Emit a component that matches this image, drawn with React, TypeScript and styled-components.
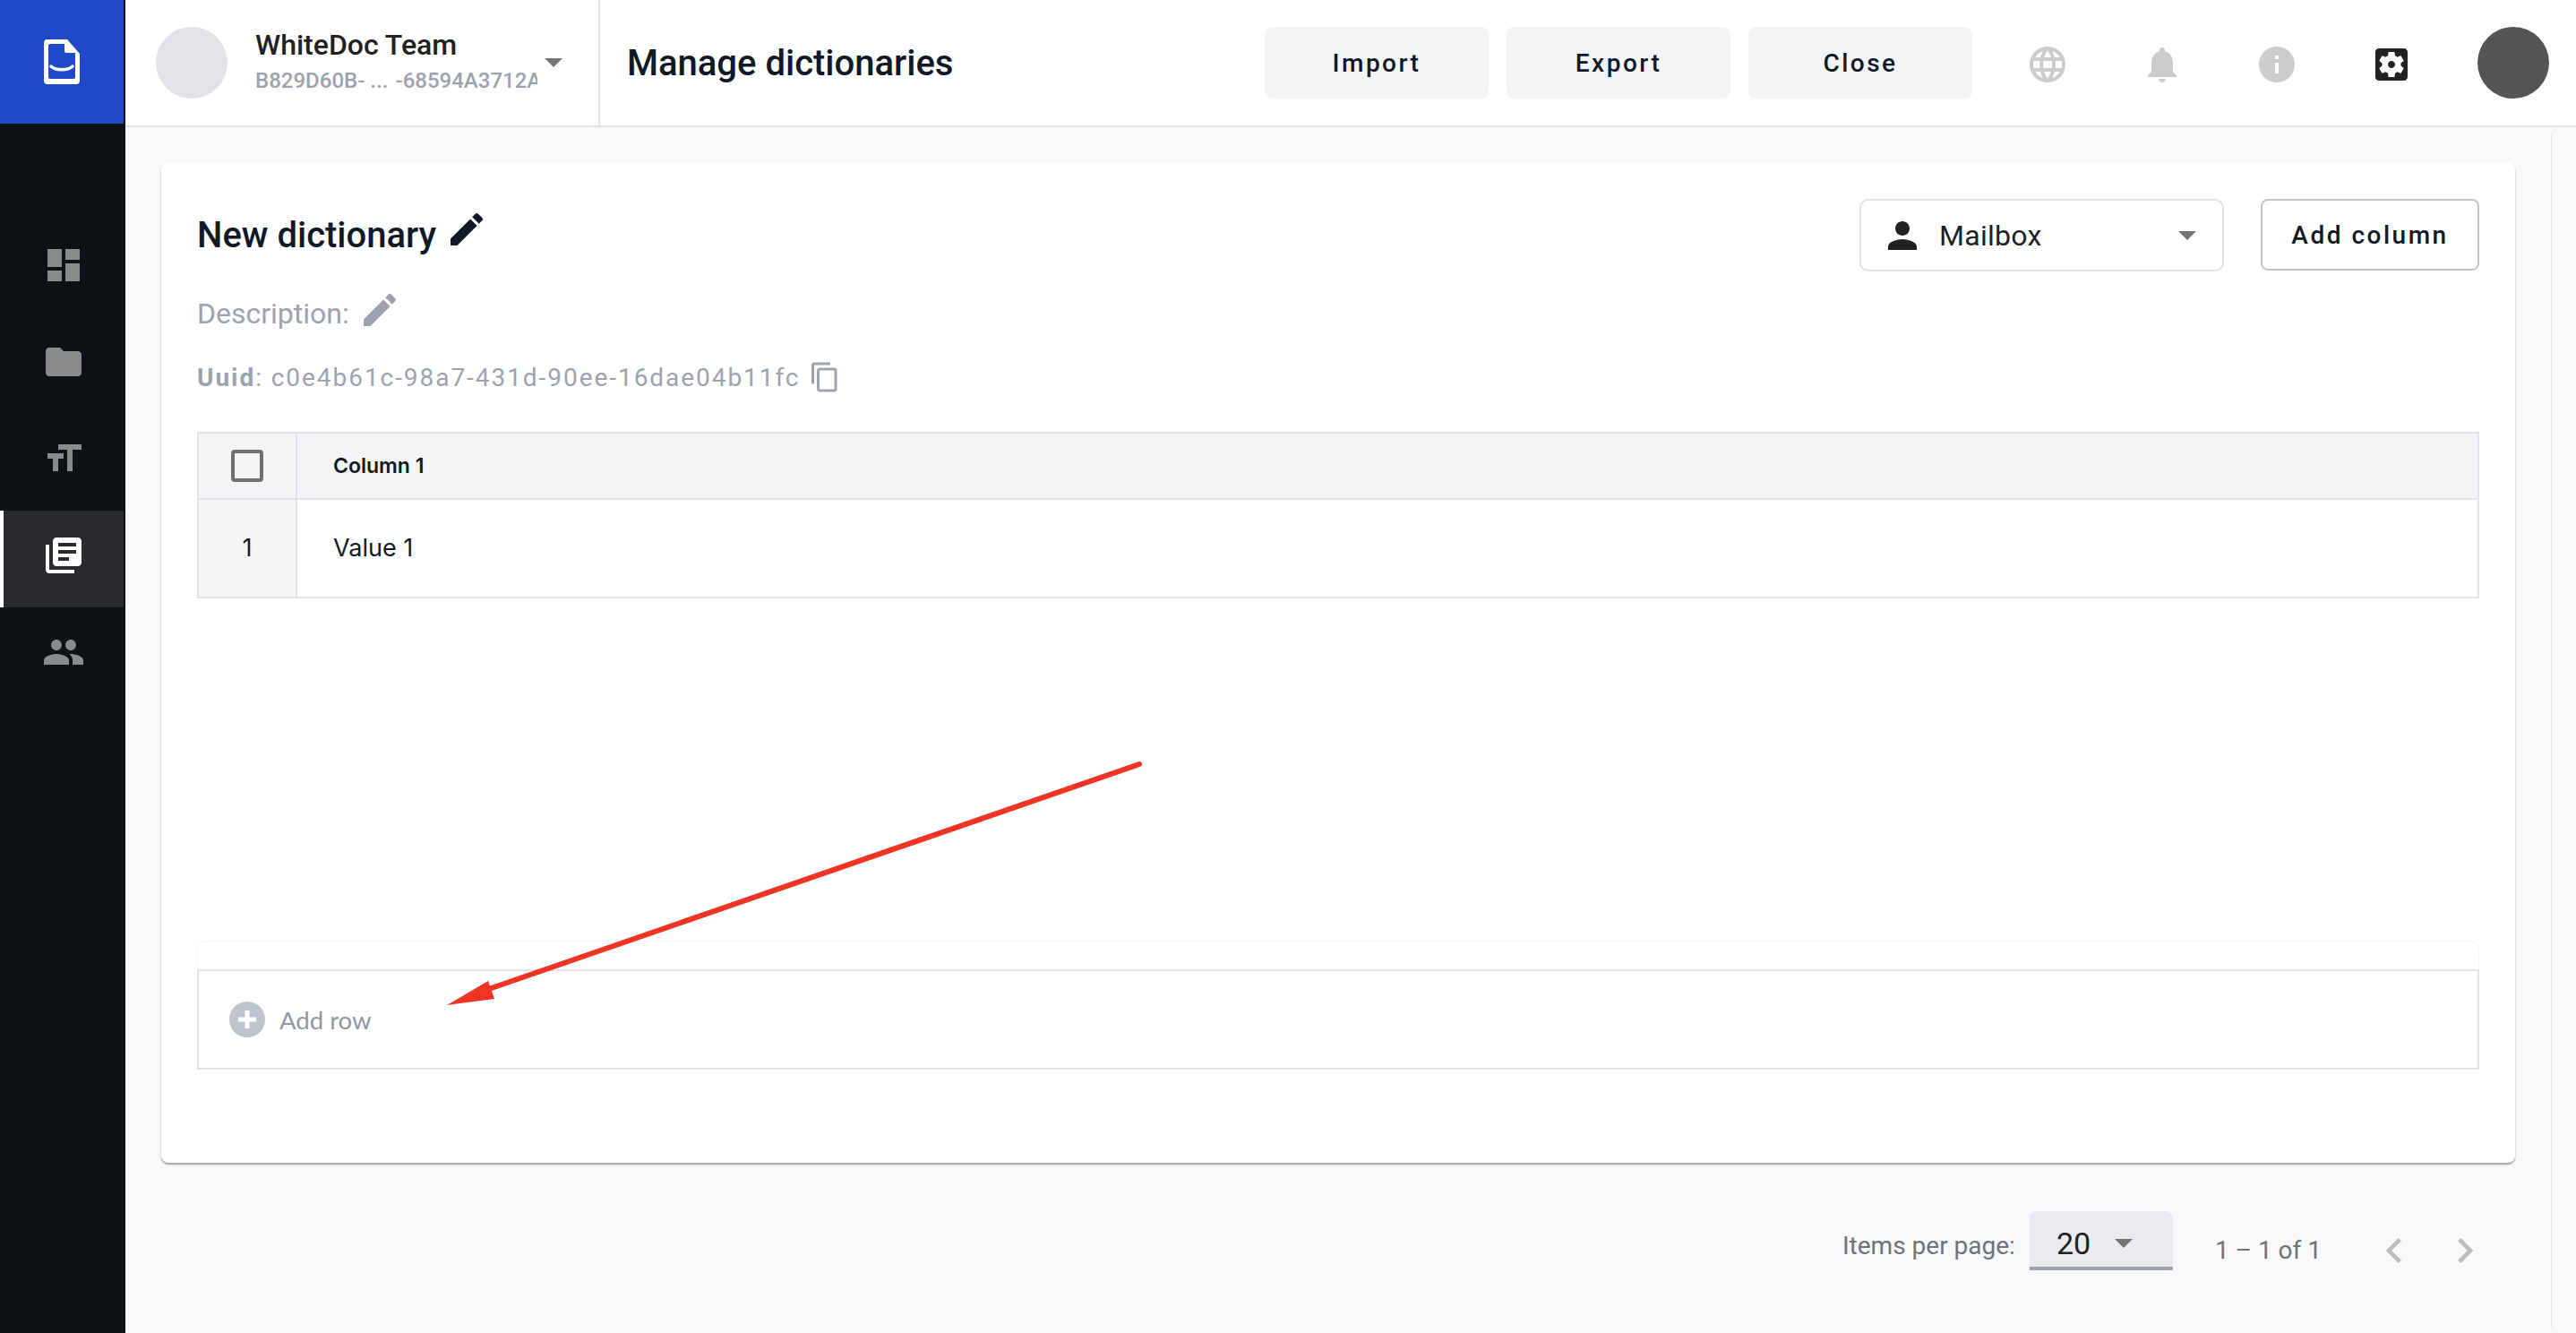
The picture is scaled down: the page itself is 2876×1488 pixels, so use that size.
import styled, { createGlobalStyle } from "styled-components";

const GlobalStyle = createGlobalStyle`
  html, body {
    margin: 0;
    padding: 0;
    background: #f7f8fa;
    font-family: Roboto, "Liberation Sans", sans-serif;
  }
  * {
    box-sizing: border-box;
  }
`;

const Page = styled.div`
  position: relative;
  display: flex;
  width: 2876px;
  height: 1488px;
  overflow: hidden;
  background: #f7f8fa;
`;

const Sidebar = styled.aside`
  flex: 0 0 140px;
  display: flex;
  flex-direction: column;
  background: #0e1116;
`;

const LogoBox = styled.div`
  width: 138px;
  height: 138px;
  display: flex;
  align-items: center;
  justify-content: center;
  background: #2049c5;
`;

const NavList = styled.nav`
  display: flex;
  flex-direction: column;
  margin-top: 108px;
`;

const NavItem = styled.div<{ $active?: boolean }>`
  width: 138px;
  height: 108px;
  display: flex;
  align-items: center;
  justify-content: center;
  padding-bottom: 8px;
  color: ${(p) => (p.$active ? "#ffffff" : "#8a8b8d")};
  background: ${(p) => (p.$active ? "#2a2b30" : "transparent")};
  border-left: 4px solid ${(p) => (p.$active ? "#ffffff" : "transparent")};
`;

const Main = styled.div`
  flex: 1;
  display: flex;
  flex-direction: column;
  min-width: 0;
`;

const Header = styled.header`
  flex: 0 0 142px;
  display: flex;
  align-items: center;
  background: #ffffff;
  border-bottom: 2px solid #e1e3e8;
`;

const TeamBox = styled.div`
  width: 530px;
  height: 140px;
  display: flex;
  align-items: center;
  padding-left: 34px;
  border-right: 2px solid #e1e3e8;
`;

const TeamAvatar = styled.div`
  flex: none;
  width: 80px;
  height: 80px;
  border-radius: 50%;
  background: #e1e3e8;
  margin-right: 31px;
`;

const TeamText = styled.div`
  width: 315px;
  padding-bottom: 5px;
  overflow: hidden;
  white-space: nowrap;
`;

const TeamName = styled.div`
  font-size: 32px;
  line-height: 40px;
  font-weight: 500;
  color: #212121;
  margin-bottom: 5px;
`;

const TeamId = styled.div`
  font-size: 24px;
  line-height: 30px;
  font-weight: 500;
  color: #9ca3af;
`;

const Caret = styled.span`
  display: block;
  flex: none;
  width: 0;
  height: 0;
  border-left: 10px solid transparent;
  border-right: 10px solid transparent;
  border-top: 10px solid #757575;
`;

const TeamCaret = styled(Caret)`
  margin-left: 8px;
`;

const PageTitle = styled.h1`
  flex: 1;
  margin: 0 0 0 30px;
  font-size: 40px;
  font-weight: 500;
  color: #111827;
`;

const ActionGroup = styled.div`
  display: flex;
  gap: 20px;
  margin-right: 60px;
`;

const ActionButton = styled.button`
  width: 250px;
  height: 80px;
  border: none;
  border-radius: 8px;
  background: #f3f4f6;
  color: #111827;
  font-family: Roboto, sans-serif;
  font-size: 28px;
  font-weight: 500;
  letter-spacing: 2.5px;
`;

const HeaderIcons = styled.div`
  display: flex;
  align-items: center;
  gap: 80px;
  margin: 4px 72px 0 0;
`;

const UserAvatar = styled.div`
  flex: none;
  width: 80px;
  height: 80px;
  margin-right: 30px;
  border-radius: 50%;
  background: #555555;
`;

const Body = styled.div`
  flex: 1;
  display: flex;
  min-height: 0;
`;

const Content = styled.div`
  flex: 1;
  min-width: 0;
  display: flex;
  flex-direction: column;
  padding: 40px 40px 0 40px;
`;

const RightRail = styled.div`
  flex: 0 0 28px;
  border-left: 1px solid #e3e5e9;
  border-radius: 10px 0 0 10px;
`;

const Card = styled.section`
  flex: 0 0 1116px;
  padding: 40px;
  display: flex;
  flex-direction: column;
  background: #ffffff;
  border-radius: 8px;
  box-shadow: 0 2px 2px rgba(0, 0, 0, 0.35);
`;

const CardTop = styled.div`
  flex: 0 0 260px;
  display: flex;
  justify-content: space-between;
  align-items: flex-start;
`;

const Info = styled.div`
  display: flex;
  flex-direction: column;
`;

const DictTitle = styled.h2`
  display: flex;
  align-items: center;
  gap: 10px;
  margin: 0;
  height: 80px;
  font-size: 40px;
  font-weight: 500;
  color: #111827;
`;

const Description = styled.div`
  display: flex;
  align-items: center;
  gap: 10px;
  margin-top: 28px;
  height: 40px;
  font-size: 32px;
  color: #9ca3af;
`;

const RaisedIcon = styled.span<{ $lift: number }>`
  display: flex;
  margin-bottom: ${(p) => p.$lift}px;
`;

const Uuid = styled.div`
  display: flex;
  align-items: center;
  gap: 10px;
  margin-top: 31px;
  height: 40px;
  font-size: 28px;
  letter-spacing: 1.95px;
  color: #9ca3af;

  strong {
    font-weight: 700;
  }
`;

const TopControls = styled.div`
  display: flex;
  gap: 41px;
`;

const Select = styled.div`
  width: 407px;
  height: 81px;
  display: flex;
  align-items: center;
  padding: 0 29px 0 22px;
  border: 2px solid #e1e1e3;
  border-radius: 10px;
  font-size: 32px;
  letter-spacing: 0.3px;
  color: #212121;
`;

const SelectLabel = styled.span`
  flex: 1;
  margin-left: 17px;
`;

const OutlineButton = styled.button`
  width: 244px;
  height: 80px;
  background: #ffffff;
  border: 2px solid #c0c5cb;
  border-radius: 8px;
  color: #111827;
  font-family: Roboto, sans-serif;
  font-size: 28px;
  font-weight: 500;
  letter-spacing: 2.5px;
`;

const TableWrap = styled.div`
  display: grid;
  grid-template-columns: 110px 1fr;
  border: solid #e1e3e8;
  border-width: 2px 2px 0 2px;
`;

const Cell = styled.div<{ $head?: boolean; $index?: boolean }>`
  height: ${(p) => (p.$head ? "74px" : "110px")};
  display: flex;
  align-items: center;
  justify-content: ${(p) => (p.$index ? "center" : "flex-start")};
  padding-left: ${(p) => (p.$index ? "0" : "40px")};
  padding-bottom: ${(p) => (p.$head ? "0" : "2px")};
  background: ${(p) => (p.$head || p.$index ? "#f3f4f6" : "#ffffff")};
  border-bottom: 2px solid #e1e3e8;
  border-right: ${(p) => (p.$index ? "2px solid #e1e3e8" : "none")};
  font-size: ${(p) => (p.$head ? "23px" : "27px")};
  font-weight: ${(p) => (p.$head ? 600 : 400)};
  font-family: Inter, sans-serif;
  color: #111827;
`;

const Checkbox = styled.div`
  width: 36px;
  height: 36px;
  border: 4px solid #6f6f6f;
  border-radius: 4px;
`;

const Spacer = styled.div`
  flex: 1;
`;

const GhostRow = styled.div`
  height: 32px;
  border: 1px solid #f5f5f7;
  border-bottom: none;
  border-radius: 10px 10px 0 0;
`;

const AddRow = styled.div`
  height: 112px;
  display: flex;
  align-items: center;
  gap: 16px;
  padding-left: 34px;
  margin-bottom: 64px;
  border: 2px solid #e1e3e8;
  font-family: Lato, sans-serif;
  font-size: 27.5px;
  color: #9097a0;
`;

const PlusCircle = styled.div`
  width: 40px;
  height: 40px;
  display: flex;
  align-items: center;
  justify-content: center;
  border-radius: 50%;
  background: #bdc4ca;
`;

const Pagination = styled.div`
  display: flex;
  align-items: flex-start;
  margin-top: 54px;
  padding-left: 1877px;
`;

const PageLabel = styled.div`
  margin-top: 22px;
  font-size: 28px;
  line-height: 34px;
  color: #6f7276;
`;

const PageSelect = styled.div`
  width: 160px;
  height: 66px;
  margin: 0 47px 0 16px;
  display: flex;
  align-items: center;
  gap: 27px;
  padding: 10px 0 0 30px;
  background: #e9eaed;
  border-bottom: 4px solid #9ca3af;
  border-radius: 8px 8px 0 0;
  font-size: 34px;
  color: #212121;
`;

const PageCount = styled.div`
  margin-top: 27px;
  font-size: 28px;
  line-height: 34px;
  color: #6f7276;
`;

const PagerIcons = styled.div`
  display: flex;
  gap: 23px;
  margin: 16px 0 0 53px;
  color: #bdbdbd;
`;

const Overlay = styled.svg`
  position: absolute;
  inset: 0;
  pointer-events: none;
`;

const Path = ({ size, d }: { size: number; d: string }) => (
  <svg width={size} height={size} viewBox="0 0 24 24" fill="currentColor">
    <path d={d} />
  </svg>
);

const PENCIL = "M3 17.25V21h3.75L17.81 9.94l-3.75-3.75L3 17.25zM20.71 7.04a1 1 0 0 0 0-1.41l-2.34-2.34a1 1 0 0 0-1.41 0l-1.83 1.83 3.75 3.75 1.83-1.83z";

export default function App() {
  return (
    <>
      <GlobalStyle />
      <Page>
        <Sidebar>
          <LogoBox>
            <svg width="40" height="50" viewBox="0 0 40 50">
              <path fill="#ffffff" d="M4 0h22l14 16v30a4 4 0 0 1-4 4H4a4 4 0 0 1-4-4V4a4 4 0 0 1 4-4z" />
              <path fill="#2049c5" d="M7 5h16v8a2 2 0 0 0 2 2h10v27a2 2 0 0 1-2 2H7a2 2 0 0 1-2-2V7a2 2 0 0 1 2-2z" />
              <path fill="none" stroke="#ffffff" strokeWidth="3.5" strokeLinecap="round" d="M8 30c5 5 19 5 24 0" />
            </svg>
          </LogoBox>
          <NavList>
            <NavItem>
              <Path size={48} d="M3 13h8V3H3v10zm0 8h8v-6H3v6zm10 0h8V11h-8v10zm0-18v6h8V3h-8z" />
            </NavItem>
            <NavItem>
              <Path size={48} d="M10 4H4c-1.1 0-2 .9-2 2v12c0 1.1.9 2 2 2h16c1.1 0 2-.9 2-2V8c0-1.1-.9-2-2-2h-8l-2-2z" />
            </NavItem>
            <NavItem>
              <Path size={48} d="M9 4v3h5v12h3V7h5V4H9zm-6 8h3v7h3v-7h3V9H3v3z" />
            </NavItem>
            <NavItem $active>
              <Path size={48} d="M4 6H2v14c0 1.1.9 2 2 2h14v-2H4V6zm16-4H8c-1.1 0-2 .9-2 2v12c0 1.1.9 2 2 2h12c1.1 0 2-.9 2-2V4c0-1.1-.9-2-2-2zm-1 9H9V9h10v2zm-4 4H9v-2h6v2zm4-8H9V5h10v2z" />
            </NavItem>
            <NavItem>
              <Path size={48} d="M16 11c1.66 0 2.99-1.34 2.99-3S17.66 5 16 5c-1.66 0-3 1.34-3 3s1.34 3 3 3zm-8 0c1.66 0 2.99-1.34 2.99-3S9.66 5 8 5C6.34 5 5 6.34 5 8s1.34 3 3 3zm0 2c-2.33 0-7 1.17-7 3.5V19h14v-2.5c0-2.33-4.67-3.5-7-3.5zm8 0c-.29 0-.62.02-.97.05 1.16.84 1.97 1.97 1.97 3.45V19h6v-2.5c0-2.33-4.67-3.5-7-3.5z" />
            </NavItem>
          </NavList>
        </Sidebar>
        <Main>
          <Header>
            <TeamBox>
              <TeamAvatar />
              <TeamText>
                <TeamName>WhiteDoc Team</TeamName>
                <TeamId>B829D60B- ...{"\u2004"}-68594A3712A</TeamId>
              </TeamText>
              <TeamCaret />
            </TeamBox>
            <PageTitle>Manage dictionaries</PageTitle>
            <ActionGroup>
              <ActionButton>Import</ActionButton>
              <ActionButton>Export</ActionButton>
              <ActionButton>Close</ActionButton>
            </ActionGroup>
            <HeaderIcons>
              <svg width="48" height="48" viewBox="0 0 24 24" fill="#cccccc">
                <path d="M11.99 2C6.47 2 2 6.48 2 12s4.47 10 9.99 10C17.52 22 22 17.52 22 12S17.52 2 11.99 2zm6.93 6h-2.95a15.65 15.65 0 0 0-1.38-3.56A8.03 8.03 0 0 1 18.92 8zM12 4.04c.83 1.2 1.48 2.53 1.91 3.96h-3.82c.43-1.43 1.08-2.76 1.91-3.96zM4.26 14C4.1 13.36 4 12.69 4 12s.1-1.36.26-2h3.38c-.08.66-.14 1.32-.14 2s.06 1.34.14 2H4.26zm.82 2h2.95c.32 1.25.78 2.45 1.38 3.56A7.99 7.99 0 0 1 5.08 16zm2.95-8H5.08a7.99 7.99 0 0 1 4.33-3.56A15.65 15.65 0 0 0 8.03 8zM12 19.96c-.83-1.2-1.48-2.53-1.91-3.96h3.82c-.43 1.43-1.08 2.76-1.91 3.96zM14.34 14H9.66c-.09-.66-.16-1.32-.16-2s.07-1.35.16-2h4.68c.09.65.16 1.32.16 2s-.07 1.34-.16 2zm.25 5.56c.6-1.11 1.06-2.31 1.38-3.56h2.95a8.03 8.03 0 0 1-4.33 3.56zM16.36 14c.08-.66.14-1.32.14-2s-.06-1.34-.14-2h3.38c.16.64.26 1.31.26 2s-.1 1.36-.26 2h-3.38z" />
              </svg>
              <svg width="48" height="48" viewBox="0 0 24 24" fill="#cccccc">
                <path d="M12 22c1.1 0 2-.9 2-2h-4c0 1.1.89 2 2 2zm6-6v-5c0-3.07-1.64-5.64-4.5-6.32V4c0-.83-.67-1.5-1.5-1.5s-1.5.67-1.5 1.5v.68C7.63 5.36 6 7.92 6 11v5l-2 2v1h16v-1l-2-2z" />
              </svg>
              <svg width="48" height="48" viewBox="0 0 24 24" fill="#cccccc">
                <path d="M12 2C6.48 2 2 6.48 2 12s4.48 10 10 10 10-4.48 10-10S17.52 2 12 2zm1 15h-2v-6h2v6zm0-8h-2V7h2v2z" />
              </svg>
              <svg width="48" height="48" viewBox="0 0 24 24" fill="#212121">
                <path d="M19 3H5c-1.1 0-2 .9-2 2v14c0 1.1.9 2 2 2h14c1.1 0 2-.9 2-2V5c0-1.1-.9-2-2-2zm-1.75 9c0 .23-.02.46-.05.68l1.48 1.16c.13.11.17.3.08.45l-1.4 2.42c-.09.15-.27.21-.43.15l-1.74-.7c-.36.28-.76.51-1.18.69l-.26 1.85c-.03.17-.18.3-.35.3h-2.8c-.17 0-.32-.13-.35-.29l-.26-1.85c-.43-.18-.82-.41-1.18-.69l-1.74.7c-.16.06-.34 0-.43-.15l-1.4-2.42a.353.353 0 0 1 .08-.45l1.48-1.16c-.03-.23-.05-.46-.05-.69 0-.23.02-.46.05-.68l-1.48-1.16a.353.353 0 0 1-.08-.45l1.4-2.42c.09-.15.27-.21.43-.15l1.74.7c.36-.28.76-.51 1.18-.69l.26-1.85c.03-.17.18-.3.35-.3h2.8c.17 0 .32.13.35.29l.26 1.85c.43.18.82.41 1.18.69l1.74-.7c.16-.06.34 0 .43.15l1.4 2.42c.09.15.05.34-.08.45l-1.48 1.16c.03.23.05.46.05.69zM12 10c-1.1 0-2 .9-2 2s.9 2 2 2 2-.9 2-2-.9-2-2-2z" />
              </svg>
            </HeaderIcons>
            <UserAvatar />
          </Header>
          <Body>
            <Content>
              <Card>
                <CardTop>
                  <Info>
                    <DictTitle>
                      New dictionary
                      <RaisedIcon $lift={12}>
                        <Path size={48} d={PENCIL} />
                      </RaisedIcon>
                    </DictTitle>
                    <Description>
                      Description:
                      <RaisedIcon $lift={8}>
                        <Path size={48} d={PENCIL} />
                      </RaisedIcon>
                    </Description>
                    <Uuid>
                      <span>
                        <strong>Uuid</strong>: c0e4b61c-98a7-431d-90ee-16dae04b11fc
                      </span>
                      <Path size={36} d="M16 1H4c-1.1 0-2 .9-2 2v14h2V3h12V1zm3 4H8c-1.1 0-2 .9-2 2v14c0 1.1.9 2 2 2h11c1.1 0 2-.9 2-2V7c0-1.1-.9-2-2-2zm0 16H8V7h11v14z" />
                    </Uuid>
                  </Info>
                  <TopControls>
                    <Select>
                      <Path size={48} d="M12 12c2.21 0 4-1.79 4-4s-1.79-4-4-4-4 1.79-4 4 1.79 4 4 4zm0 2c-2.67 0-8 1.34-8 4v2h16v-2c0-2.66-5.33-4-8-4z" />
                      <SelectLabel>Mailbox</SelectLabel>
                      <Caret />
                    </Select>
                    <OutlineButton>Add column</OutlineButton>
                  </TopControls>
                </CardTop>
                <TableWrap>
                  <Cell $head $index>
                    <Checkbox />
                  </Cell>
                  <Cell $head>Column 1</Cell>
                  <Cell $index>1</Cell>
                  <Cell>Value 1</Cell>
                </TableWrap>
                <Spacer />
                <GhostRow />
                <AddRow>
                  <PlusCircle>
                    <svg width="20" height="20" viewBox="0 0 20 20" fill="#ffffff">
                      <path d="M7.5 0h5v7.5H20v5h-7.5V20h-5v-7.5H0v-5h7.5z" />
                    </svg>
                  </PlusCircle>
                  Add row
                </AddRow>
              </Card>
              <Pagination>
                <PageLabel>Items per page:</PageLabel>
                <PageSelect>
                  20
                  <Caret />
                </PageSelect>
                <PageCount>1 – 1 of 1</PageCount>
                <PagerIcons>
                  <Path size={56} d="M15.41 7.41L14 6l-6 6 6 6 1.41-1.41L10.83 12z" />
                  <Path size={56} d="M10 6L8.59 7.41 13.17 12l-4.58 4.59L10 18l6-6z" />
                </PagerIcons>
              </Pagination>
            </Content>
            <RightRail />
          </Body>
        </Main>
        <Overlay width="2876" height="1488" viewBox="0 0 2876 1488">
          <line x1="1272" y1="853" x2="540" y2="1106" stroke="#ee3524" strokeWidth="6" strokeLinecap="round" />
          <polygon points="499,1122 545,1095 552,1115" fill="#ee3524" />
        </Overlay>
      </Page>
    </>
  );
}
